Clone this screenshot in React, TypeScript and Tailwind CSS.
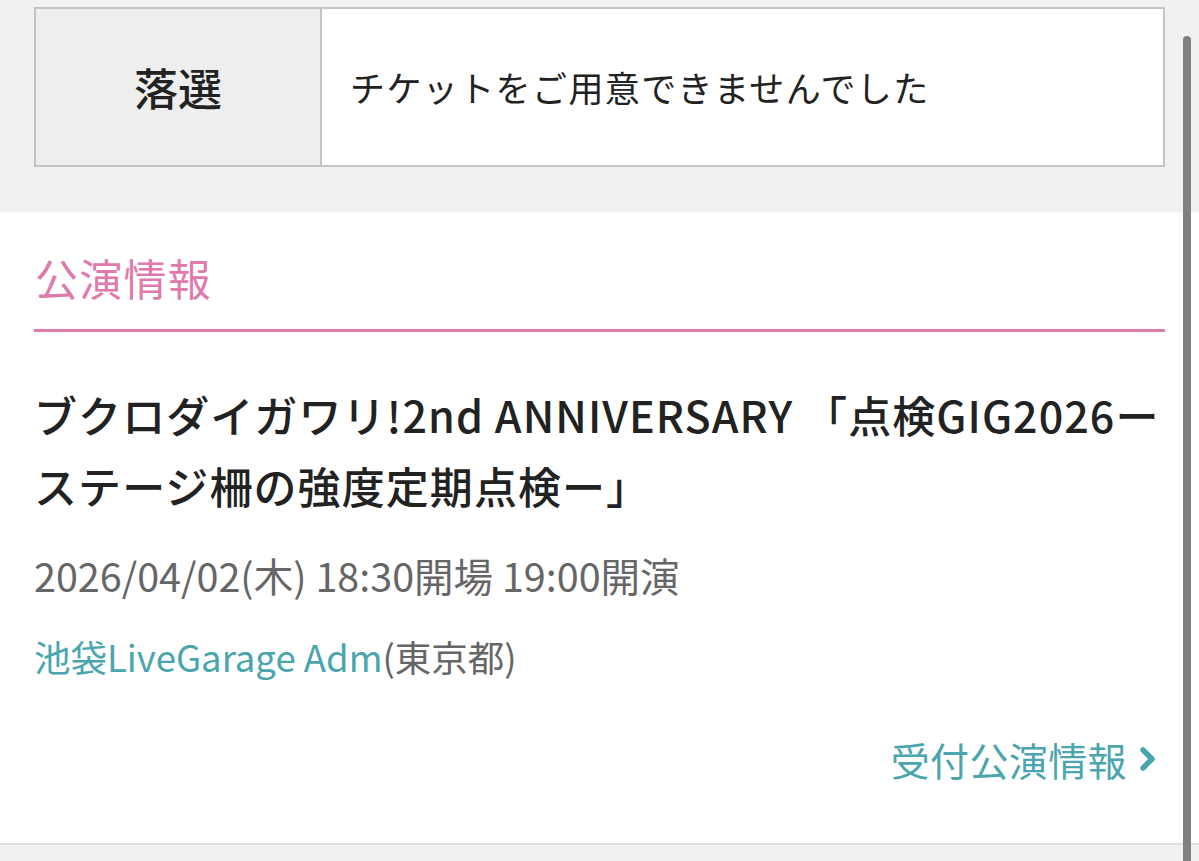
import React from 'react';

const font = { fontFamily: '"Noto Sans CJK JP", "Noto Sans", sans-serif' };

function ChevronRight() {
  return (
    <svg className="w-[24px] h-[28px] ml-[8px]" viewBox="0 0 24 28" fill="none">
      <path d="M8 5l9 9-9 9" stroke="#4ba5ae" strokeWidth={5.5} strokeLinecap="round" strokeLinejoin="round" />
    </svg>
  );
}

export default function App() {
  return (
    <div className="relative w-[1199px] h-[861px] overflow-hidden bg-[#f1f1f1]" style={font}>
      {/* lottery result */}
      <div className="h-[212px] pt-[7px] px-[34px]">
        <div className="flex h-[160px] border-2 border-[#c4c4c4] w-[1131px]">
          <div className="w-[286px] bg-[#eeeeee] border-r-2 border-[#c4c4c4] flex items-center justify-center">
            <span className="text-[44px] font-medium text-[#222]">落選</span>
          </div>
          <div className="flex-1 bg-white flex items-center pl-[28px]">
            <span className="text-[35px] text-[#222] tracking-[0.04em]">チケットをご用意できませんでした</span>
          </div>
        </div>
      </div>

      {/* performance info */}
      <div className="bg-white h-[633px] px-[34px] border-b-2 border-[#e0e0e0]">
        <div className="pt-[37px] pb-[24px] border-b-[3px] border-[#df7aad] w-[1131px]">
          <h2 className="text-[43px] leading-[56px] text-[#df7aad] tracking-[0.03em] pl-[1px]">公演情報</h2>
        </div>
        <div className="pt-[47px]">
          <h3 className="text-[43px] leading-[71px] font-medium text-[#222] tracking-[0.025em] whitespace-nowrap">
            ブクロダイガワリ!2nd ANNIVERSARY 「点検GIG2026ー
            <br />
            ステージ柵の強度定期点検ー」
          </h3>
          <p className="mt-[30px] text-[39.5px] leading-[48px] text-[#666]">
            2026/04/02(木) 18:30開場 19:00開演
          </p>
          <p className="mt-[34px] text-[36.5px] leading-[48px] text-[#666]">
            <span className="text-[#4ba5ae]">池袋LiveGarage Adm</span>(東京都)
          </p>
          <div className="mt-[52px] flex justify-end pr-[6px]">
            <a className="flex items-center text-[39px] leading-[52px] text-[#4ba5ae] tracking-[0.01em]">
              受付公演情報
              <ChevronRight />
            </a>
          </div>
        </div>
      </div>

      {/* scrollbar overlay */}
      <div className="absolute left-[1183px] top-[36px] w-[8px] h-[840px] rounded-full bg-[#808080]" />
    </div>
  );
}
